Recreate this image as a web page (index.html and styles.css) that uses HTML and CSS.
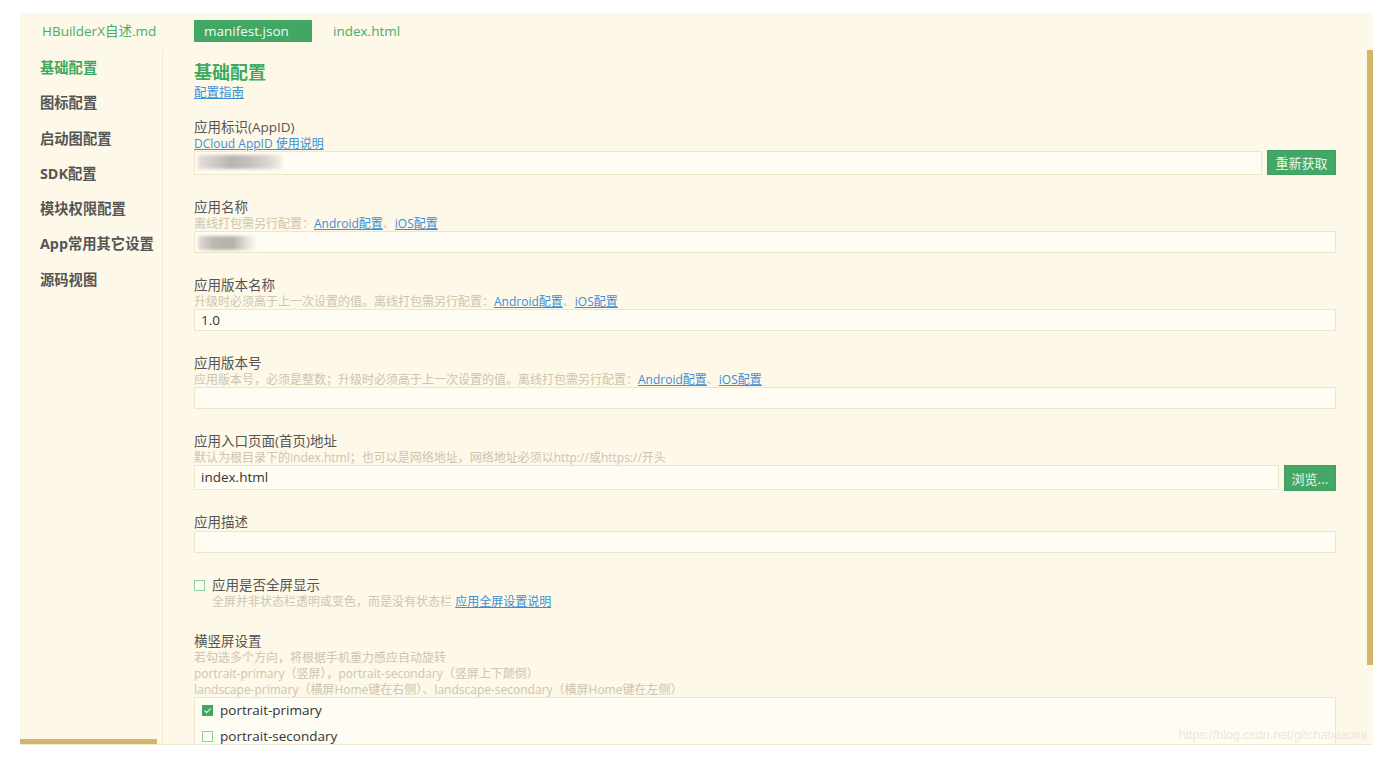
FILE: index.html
```html
<!DOCTYPE html>
<html lang="zh-CN">
<head>
<meta charset="utf-8">
<title>manifest.json</title>
<link rel="stylesheet" href="styles.css">
</head>
<body>
<div class="app">
  <div class="tabs">
    <span class="tab tab-first">HBuilderX自述.md</span>
    <span class="tab tab-active">manifest.json</span>
    <span class="tab">index.html</span>
  </div>
  <div class="main">
    <nav class="sidebar">
      <a class="nav-item nav-active">基础配置</a>
      <a class="nav-item">图标配置</a>
      <a class="nav-item">启动图配置</a>
      <a class="nav-item">SDK配置</a>
      <a class="nav-item">模块权限配置</a>
      <a class="nav-item">App常用其它设置</a>
      <a class="nav-item">源码视图</a>
      <div class="hscroll"></div>
    </nav>
    <section class="content">
      <h1 class="title">基础配置</h1>
      <a class="link guide">配置指南</a>

      <div class="field first">
        <div class="label">应用标识(AppID)</div>
        <a class="link appid-link">DCloud AppID 使用说明</a>
        <div class="row row-id">
          <div class="input input-tall"><span class="blur blur-id"></span></div>
          <button class="btn btn-refresh">重新获取</button>
        </div>
      </div>

      <div class="field">
        <div class="label">应用名称</div>
        <div class="hint">离线打包需另行配置：<a class="link">Android配置</a>、<a class="link">iOS配置</a></div>
        <div class="input"><span class="blur blur-name"></span></div>
      </div>

      <div class="field">
        <div class="label">应用版本名称</div>
        <div class="hint">升级时必须高于上一次设置的值。离线打包需另行配置：<a class="link">Android配置</a>、<a class="link">iOS配置</a></div>
        <div class="input">1.0</div>
      </div>

      <div class="field">
        <div class="label">应用版本号</div>
        <div class="hint">应用版本号，必须是整数；升级时必须高于上一次设置的值。离线打包需另行配置：<a class="link">Android配置</a>、<a class="link">iOS配置</a></div>
        <div class="input"></div>
      </div>

      <div class="field">
        <div class="label">应用入口页面(首页)地址</div>
        <div class="hint">默认为根目录下的index.html；也可以是网络地址，网络地址必须以http://或https://开头</div>
        <div class="row row-entry">
          <div class="input input-entry">index.html</div>
          <button class="btn btn-browse">浏览...</button>
        </div>
      </div>

      <div class="field">
        <div class="label">应用描述</div>
        <div class="input"></div>
      </div>

      <div class="field">
        <div class="label check-label"><span class="checkbox"></span>应用是否全屏显示</div>
        <div class="hint indent">全屏并非状态栏透明或变色，而是没有状态栏 <a class="link">应用全屏设置说明</a></div>
      </div>

      <div class="field">
        <div class="label">横竖屏设置</div>
        <div class="hint hint-lh">若勾选多个方向，将根据手机重力感应自动旋转</div>
        <div class="hint hint-lh">portrait-primary（竖屏），portrait-secondary（竖屏上下颠倒）</div>
        <div class="hint hint-lh">landscape-primary（横屏Home键在右侧）、landscape-secondary（横屏Home键在左侧）</div>
        <div class="options">
          <div class="option"><span class="checkbox checked"><svg viewBox="0 0 11 11" width="11" height="11"><path d="M2.5 5.6 L4.6 7.6 L8.6 3.4" fill="none" stroke="#dff3e4" stroke-width="1.3"/></svg></span>portrait-primary</div>
          <div class="option"><span class="checkbox"></span>portrait-secondary</div>
        </div>
      </div>
      <div class="vscroll"></div>
      <div class="watermark">https://blog.csdn.net/gitchatxiaomi</div>
    </section>
  </div>
</div>
</body>
</html>
```

FILE: styles.css
```css
* { box-sizing: border-box; }
html, body { margin: 0; padding: 0; background: #ffffff; }
body {
  font-family: "Open Sans", "Noto Sans CJK SC", sans-serif;
  color: #555;
}
.app {
  margin: 13px 0 0 20px;
  width: 1353px;
  height: 732px;
  background: #fdf8e8;
  display: flex;
  flex-direction: column;
  overflow: hidden;
  border-bottom: 1px solid #f1ead6;
}
.tabs {
  height: 37px;
  display: flex;
  align-items: center;
  padding: 0 0 2px 22px;
  font-size: 13.5px;
}
.tab {
  color: #45ad68;
  line-height: 22px;
  height: 22px;
  white-space: nowrap;
}
.tab-first { width: 152px; }
.tab-active {
  background: #42a664;
  color: #f3fbf5;
  width: 118px;
  padding-left: 10px;
  margin-right: 21px;
}
.main {
  flex: 1;
  display: flex;
  min-height: 0;
}
.sidebar {
  width: 143px;
  border-right: 1px solid #f3ead2;
  position: relative;
  display: flex;
  flex-direction: column;
}
.nav-item {
  padding-left: 20px;
  height: 35.3px;
  line-height: 35.3px;
  font-size: 14.3px;
  font-weight: bold;
  color: #555;
  white-space: nowrap;
}
.nav-active { color: #3caa5f; }
.hscroll {
  position: absolute;
  left: 0;
  bottom: 0;
  width: 137px;
  height: 5px;
  background: #d4b56b;
}
.content {
  flex: 1;
  position: relative;
  padding: 11px 37px 0 31px;
  overflow: hidden;
}
.title {
  margin: 0;
  height: 22px;
  font-size: 18px;
  line-height: 22px;
  font-weight: bold;
  color: #3caa5f;
}
.link {
  color: #3b8fd8;
  text-decoration: underline;
  cursor: pointer;
}
.guide {
  display: block;
  margin-top: 2px;
  height: 16px;
  font-size: 12.5px;
  line-height: 16px;
  width: max-content;
}
.field { margin-top: 23px; }
.field.first { margin-top: 17px; }
.label {
  height: 18px;
  font-size: 13.5px;
  line-height: 18px;
  color: #555;
  white-space: nowrap;
}
.appid-link {
  display: block;
  height: 16px;
  font-size: 12px;
  line-height: 16px;
  width: max-content;
}
.hint {
  height: 15px;
  font-size: 12px;
  line-height: 15px;
  color: #cdc5af;
  white-space: nowrap;
}
.hint-lh { height: 16px; line-height: 16px; }
.hint .link { color: #3b8fd8; }
.indent { padding-left: 18px; }
.row {
  display: flex;
  align-items: flex-start;
  gap: 5px;
}
.row-id { height: 23px; }
.row-entry { height: 25px; }
.input {
  height: 22px;
  border: 1px solid #efe5c9;
  background: #fffcf4;
  font-size: 13.5px;
  line-height: 20px;
  padding-left: 6px;
  color: #333;
  flex: 1;
  position: relative;
  white-space: nowrap;
}
.input-tall { height: 24px; margin-top: -1px; }
.input-entry { height: 25px; line-height: 23px; }
.btn {
  font-family: "Noto Sans CJK SC", sans-serif;
  border: 1px solid #3f9f60;
  background: #43a866;
  color: #e9f6ed;
  font-size: 13px;
  padding: 0;
  flex: none;
}
.btn-refresh { width: 69px; height: 25px; margin-top: -2px; }
.btn-browse { width: 52px; height: 26px; }
.blur {
  position: absolute;
  top: 3px;
  left: 3px;
  height: 14px;
  filter: blur(1.5px);
  background: linear-gradient(90deg, #e4e0d8 0%, #cfcbc4 20%, #b9b5ae 40%, #c4c0ba 60%, #d6d2cb 80%, #f3efe7 100%);
}
.blur-id { width: 84px; }
.blur-name { width: 58px; top: 4px; background: linear-gradient(90deg, #e4e0d8 0%, #bcb8b1 25%, #b5b1aa 60%, #e6e2db 85%, #fbf8f0 100%); }
.check-label { display: flex; align-items: center; }
.checkbox {
  display: inline-block;
  width: 11px;
  height: 11px;
  border: 1px solid #8fcf9f;
  background: #fffcf4;
  margin-right: 7px;
  flex: none;
}
.checkbox.checked {
  background: #3ca95f;
  border-color: #3ca95f;
  position: relative;
}
.checkbox.checked svg {
  position: absolute;
  left: -1px;
  top: -1px;
}
.options {
  margin-top: -1px;
  border: 1px solid #efe5c9;
  background: #fffcf4;
  padding: 0 0 0 7px;
  height: 80px;
}
.option {
  display: flex;
  align-items: center;
  height: 25.5px;
  font-size: 13.5px;
  line-height: 25px;
  color: #333;
}
.vscroll {
  position: absolute;
  right: 0;
  top: 0;
  width: 6px;
  height: 615px;
  background: #d3b66b;
}
.watermark {
  position: absolute;
  right: 6px;
  bottom: 2px;
  font-family: "Liberation Sans", sans-serif;
  font-size: 12.5px;
  color: #ece7dd;
}
```
